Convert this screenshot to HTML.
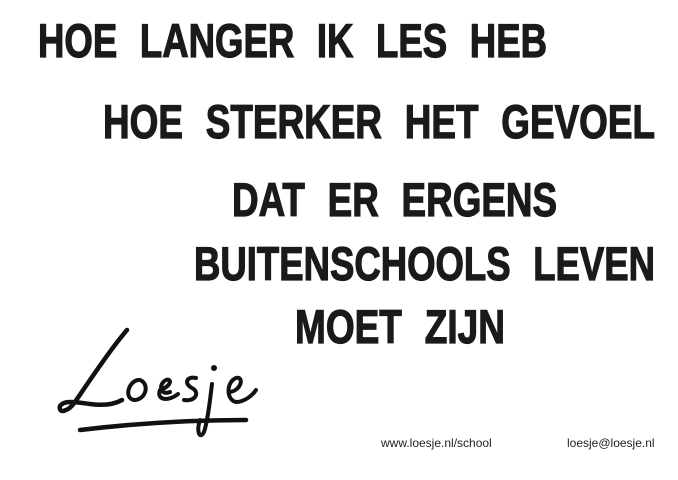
<!DOCTYPE html>
<html><head><meta charset="utf-8"><style>
html,body{margin:0;padding:0;background:#fff;width:678px;height:480px;overflow:hidden}
svg{display:block}
.h{font-family:"Liberation Sans",sans-serif;font-weight:bold;font-size:47px;fill:#1a1a1a;stroke:#1a1a1a;stroke-width:1.2px;word-spacing:16px}
.s{font-family:"Liberation Sans",sans-serif;font-size:12px;fill:#222}
</style></head><body>
<svg width="678" height="480" viewBox="0 0 678 480">
<text class="h" x="38" y="57" textLength="509" lengthAdjust="spacingAndGlyphs">HOE LANGER IK LES HEB</text>
<text class="h" x="103" y="138" textLength="552" lengthAdjust="spacingAndGlyphs">HOE STERKER HET GEVOEL</text>
<text class="h" x="232" y="216" textLength="325" lengthAdjust="spacingAndGlyphs">DAT ER ERGENS</text>
<text class="h" x="194" y="280" textLength="461" lengthAdjust="spacingAndGlyphs">BUITENSCHOOLS LEVEN</text>
<text class="h" x="295" y="343" textLength="210" lengthAdjust="spacingAndGlyphs">MOET ZIJN</text>
<g fill="none" stroke="#111" stroke-linecap="round" stroke-linejoin="round">
<path d="M127 330 C110 350 90 380 75 402 C68 412 58 414 60 406 C64 400 75 402 90 404 C105 406 115 404 122 400" stroke-width="4.5"/>
<path d="M138 380 C128 382 124 398 134 400 C146 400 150 384 140 380" stroke-width="4"/>
<path d="M170 392 C160 396 158 384 166 380 C172 378 172 386 160 390 C156 400 168 402 178 394" stroke-width="4"/>
<path d="M196 378 C186 376 184 384 192 388 C200 392 196 402 184 400" stroke-width="4"/>
<path d="M212 384 C210 400 208 420 204 432 C200 440 196 432 200 420" stroke-width="4"/>
<circle cx="214" cy="368" r="2.5" fill="#111"/>
<path d="M230 392 C242 390 244 376 236 378 C226 382 226 400 236 402 C244 402 252 396 256 390" stroke-width="4"/>
<path d="M80 430 C130 424 190 420 246 420" stroke-width="4.5"/>
</g>
<text class="s" x="381" y="447">www.loesje.nl/school</text>
<text class="s" x="567" y="447">loesje@loesje.nl</text>
</svg>
</body></html>
